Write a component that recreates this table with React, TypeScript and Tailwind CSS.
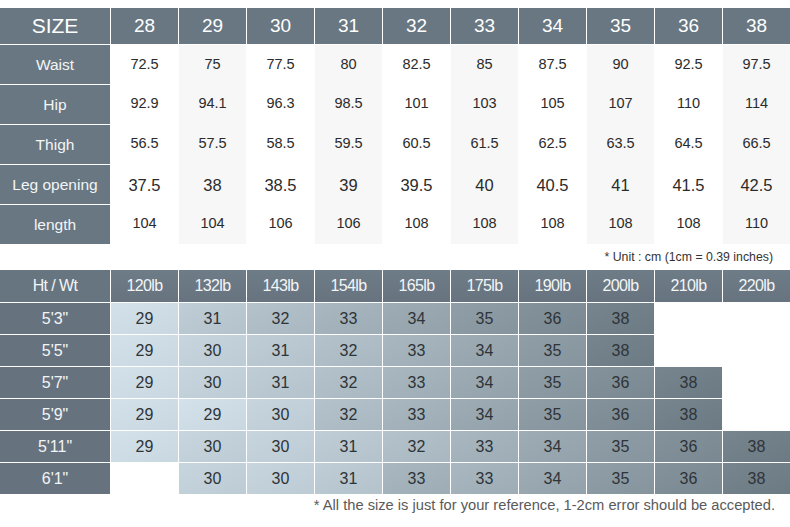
const sizes = ['28', '29', '30', '31', '32', '33', '34', '35', '36', '38']

const measures: { label: string; values: string[]; big?: boolean }[] = [
  { label: 'Waist', values: ['72.5', '75', '77.5', '80', '82.5', '85', '87.5', '90', '92.5', '97.5'] },
  { label: 'Hip', values: ['92.9', '94.1', '96.3', '98.5', '101', '103', '105', '107', '110', '114'] },
  { label: 'Thigh', values: ['56.5', '57.5', '58.5', '59.5', '60.5', '61.5', '62.5', '63.5', '64.5', '66.5'] },
  { label: 'Leg opening', values: ['37.5', '38', '38.5', '39', '39.5', '40', '40.5', '41', '41.5', '42.5'], big: true },
  { label: 'length', values: ['104', '104', '106', '106', '108', '108', '108', '108', '108', '110'] },
]

const weights = ['120lb', '132lb', '143lb', '154lb', '165lb', '175lb', '190lb', '200lb', '210lb', '220lb']

const heights: { label: string; cells: (number | null)[] }[] = [
  { label: `5'3"`, cells: [29, 31, 32, 33, 34, 35, 36, 38, null, null] },
  { label: `5'5"`, cells: [29, 30, 31, 32, 33, 34, 35, 38, null, null] },
  { label: `5'7"`, cells: [29, 30, 31, 32, 33, 34, 35, 36, 38, null] },
  { label: `5'9"`, cells: [29, 29, 30, 32, 33, 34, 35, 36, 38, null] },
  { label: `5'11"`, cells: [29, 30, 30, 31, 32, 33, 34, 35, 36, 38] },
  { label: `6'1"`, cells: [null, 30, 30, 31, 33, 33, 34, 35, 36, 38] },
]

// tone per size, light blue-grey for small sizes down to slate for the biggest
const cellTone: Record<number, string> = {
  29: 'bg-linear-to-br from-[#d3e1ea] to-[#c9d7e0]',
  30: 'bg-linear-to-br from-[#c7d5de] to-[#bdcbd4]',
  31: 'bg-linear-to-br from-[#bfcdd6] to-[#b4c2cb]',
  32: 'bg-linear-to-br from-[#b4c2cb] to-[#a9b7c0]',
  33: 'bg-linear-to-br from-[#a9b7c0] to-[#9eacb5]',
  34: 'bg-linear-to-br from-[#9eacb5] to-[#93a1aa]',
  35: 'bg-linear-to-br from-[#909ea8] to-[#86949e]',
  36: 'bg-linear-to-br from-[#84929c] to-[#7a8892]',
  38: 'bg-linear-to-br from-[#77858f] to-[#6c7a84]',
}

function SizeTable() {
  return (
    <div className="flex gap-px">
      <div className="w-[110px] flex flex-col gap-px">
        <div className="h-[36px] bg-[#687782] flex items-center justify-center text-[21px] text-white">SIZE</div>
        {measures.map((m) => (
          <div key={m.label} className="h-[39px] bg-[#687782] flex items-center justify-center text-[15.5px] text-[#f3f5f6]">
            {m.label}
          </div>
        ))}
      </div>
      {sizes.map((s, i) => (
        <div key={s} className="w-[67px] flex flex-col gap-px">
          <div className="h-[36px] bg-[#687782] flex items-center justify-center text-[19px] text-white">{s}</div>
          <div className={`h-[199px] flex flex-col ${i % 2 === 1 ? 'bg-[#f7f7f7]' : 'bg-white'}`}>
            {measures.map((m) => (
              <div
                key={m.label}
                className={`flex-1 flex items-center justify-center text-[#2b2b2b] ${m.big ? 'text-[16.5px] pt-[2px]' : 'text-[14.5px]'}`}
              >
                {m.values[i]}
              </div>
            ))}
          </div>
        </div>
      ))}
    </div>
  )
}

function FitTable() {
  return (
    <div className="grid grid-cols-[110px_repeat(10,67px)] gap-px">
      <div className="h-[32px] bg-[#677580] flex items-center justify-center text-[16px] tracking-[-0.6px] text-[#f2f5f7]">Ht / Wt</div>
      {weights.map((w) => (
        <div key={w} className="h-[32px] bg-linear-to-b from-[#6e7c87] to-[#67747f] flex items-center justify-center text-[16px] tracking-[-0.6px] text-[#f2f5f7]">
          {w}
        </div>
      ))}
      {heights.map((h) => (
        <div key={h.label} className="contents">
          <div className="h-[31px] bg-[#66737e] flex items-center justify-center text-[16px] text-[#f2f5f7]">{h.label}</div>
          {h.cells.map((c, i) => (
            <div
              key={i}
              className={`h-[31px] flex items-center justify-center text-[16px] text-[#2e3438] ${c ? cellTone[c] : ''}`}
            >
              {c ?? ''}
            </div>
          ))}
        </div>
      ))}
    </div>
  )
}

export default function App() {
  return (
    <div className="w-[790px] h-[527px] bg-white pt-[8px] font-['Liberation_Sans',Arial,sans-serif] overflow-hidden">
      <SizeTable />
      <div className="h-[26px] flex items-center justify-end pr-[17px] text-[12.3px] text-[#333]">
        * Unit : cm (1cm = 0.39 inches)
      </div>
      <FitTable />
      <div className="h-[22px] flex items-center justify-end pr-[15px] text-[14.7px] text-[#5a5a5a]">
        * All the size is just for your reference, 1-2cm error should be accepted.
      </div>
    </div>
  )
}
